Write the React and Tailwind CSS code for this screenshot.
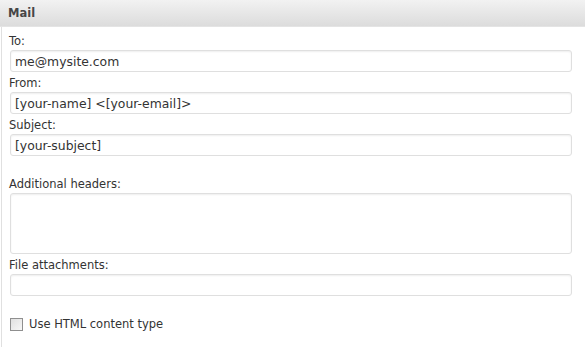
export default function App() {
  const font = { fontFamily: '"DejaVu Sans", Verdana, sans-serif' }
  const label = "block h-[20px] pt-[3px] pl-[7px] text-[11.5px] leading-[17px] text-[#333]"
  const input =
    "block h-[22px] w-[562px] ml-[8px] rounded-[3px] border border-[#dfdfdf] bg-white px-[4px] text-[12.4px] text-[#333] shadow-[inset_0_1px_2px_rgba(0,0,0,0.07)] outline-none"

  return (
    <div className="h-[347px] w-[585px] bg-white" style={font}>
      <div className="h-[27px] border-b border-[#e4e4e4] bg-gradient-to-b from-[#f2f2f2] to-[#dcdcdc] pl-[8px] text-[11.5px] font-bold leading-[26px] text-[#464646]">
        Mail
      </div>
      <div className="ml-[1px] h-[320px] border-l border-[#e0e0e0] pt-[3px]">
        <label className={label}>To:</label>
        <input className={input} defaultValue="me@mysite.com" />
        <label className={label}>From:</label>
        <input className={input} defaultValue="[your-name] <[your-email]>" />
        <label className={label}>Subject:</label>
        <input className={input} defaultValue="[your-subject]" />

        <label className={`${label} mt-[17px]`}>Additional headers:</label>
        <textarea className={`${input} h-[61px] resize-none`} />
        <label className={label}>File attachments:</label>
        <input className={input} />

        <div className="mt-[20px] ml-[8px] flex items-center gap-[6px] text-[11.5px] text-[#333]">
          <span className="block h-[13px] w-[13px] border border-[#8f8f8f] bg-gradient-to-br from-[#e0e0e0] to-[#f7f7f7]" />
          <span>Use HTML content type</span>
        </div>
      </div>
    </div>
  )
}
